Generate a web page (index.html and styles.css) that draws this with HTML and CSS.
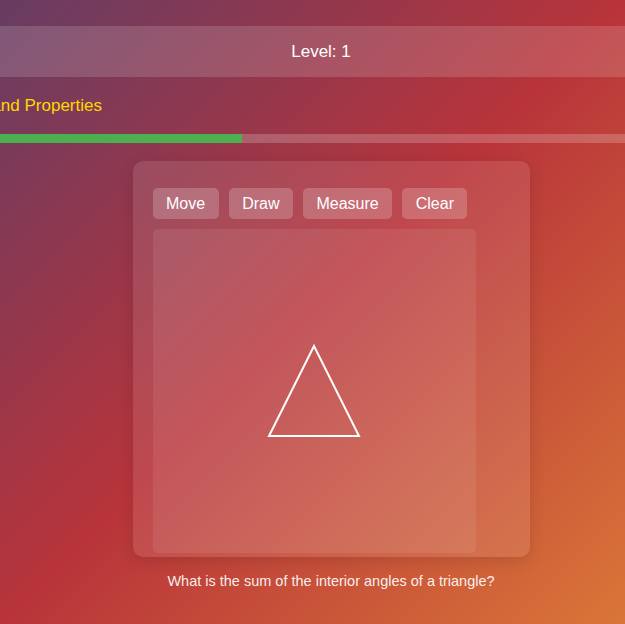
FILE: index.html
```html
<!DOCTYPE html>
<html lang="en">
<head>
<meta charset="utf-8">
<title>Geometry</title>
<link rel="stylesheet" href="styles.css">
</head>
<body>
<div class="app">
  <div class="level-bar">Level: 1</div>
  <h2 class="topic">Shapes and Properties</h2>
  <div class="progress"><div class="progress-fill" style="width: 313px"></div></div>
  <div class="card">
    <div class="toolbar">
      <button class="tool">Move</button>
      <button class="tool">Draw</button>
      <button class="tool">Measure</button>
      <button class="tool">Clear</button>
    </div>
    <div class="canvas">
      <svg class="shape" width="323" height="324" viewBox="0 0 323 324">
        <polygon points="161,117 116,207 206,207" fill="none" stroke="#fff" stroke-width="2"/>
      </svg>
    </div>
  </div>
  <p class="question">What is the sum of the interior angles of a triangle?</p>
</div>
</body>
</html>
```
FILE: styles.css
```css
html, body {
  margin: 0;
  padding: 0;
  height: 100%;
}
body {
  font-family: "Liberation Sans", Arial, sans-serif;
  color: #fff;
  background: linear-gradient(135deg, #673c63 0%, #b8343a 50%, #da7638 100%);
  overflow: hidden;
}
.app {
  width: 804px;
  margin-left: -71px;
  padding-top: 26px;
  display: flex;
  flex-direction: column;
  align-items: center;
}
.level-bar {
  align-self: stretch;
  background: rgba(255, 255, 255, 0.15);
  padding: 16px 20px 16px 0;
  font-size: 17px;
  line-height: 19px;
  text-align: center;
}
.topic {
  align-self: stretch;
  margin: 19px 0 0;
  font-size: 17px;
  line-height: 20px;
  font-weight: normal;
  color: #ffd700;
}
.progress {
  align-self: stretch;
  margin-top: 18px;
  height: 9px;
  background: rgba(255, 255, 255, 0.2);
}
.progress-fill {
  height: 100%;
  background: #4caf50;
}
.card {
  margin-top: 18px;
  width: 397px;
  height: 396px;
  box-sizing: border-box;
  padding: 27px 19px 0 20px;
  background: rgba(255, 255, 255, 0.1);
  border-radius: 10px;
  box-shadow: 0 4px 16px rgba(0, 0, 0, 0.12);
}
.toolbar {
  display: flex;
  gap: 10px;
  margin-bottom: 10px;
}
.tool {
  font-family: inherit;
  font-size: 16px;
  line-height: 19px;
  color: #fff;
  background: rgba(255, 255, 255, 0.2);
  border: none;
  border-radius: 5px;
  padding: 6px 13.5px;
}
.canvas {
  width: 323px;
  height: 324px;
  background: rgba(255, 255, 255, 0.08);
  border-radius: 5px;
}
.shape {
  display: block;
}
.question {
  margin: 16px 0 0;
  font-size: 14.5px;
  line-height: 17px;
  color: rgba(255, 255, 255, 0.92);
}
```
